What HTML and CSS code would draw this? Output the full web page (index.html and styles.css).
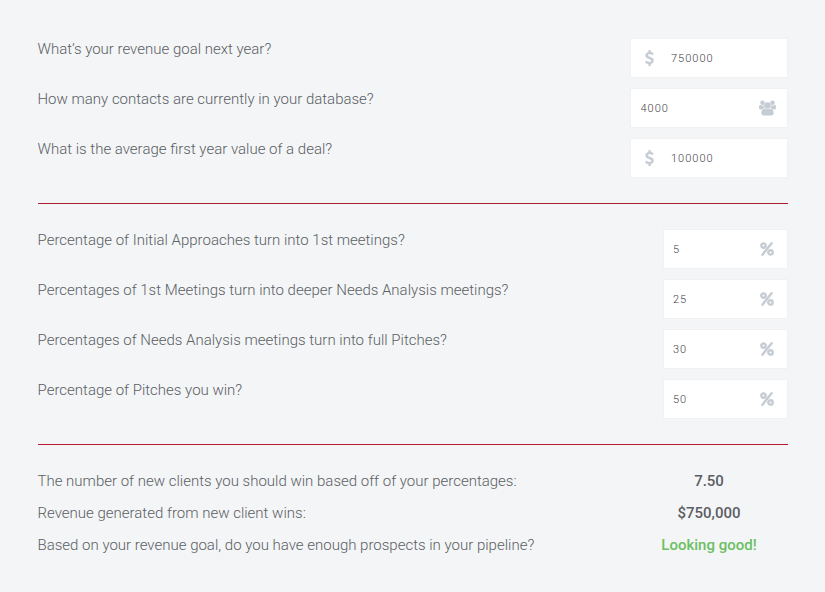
FILE: index.html
```html
<!DOCTYPE html>
<html lang="en">
<head>
<meta charset="UTF-8">
<meta name="viewport" content="width=device-width, initial-scale=1.0">
<title>Pipeline Calculator</title>
<link rel="stylesheet" href="styles.css">
</head>
<body>

<svg class="sprite" width="0" height="0">
    <symbol id="dollar" viewBox="0 0 1024 1792">
        <path stroke="currentColor" stroke-width="50" d="M978 1185q0 153-99.500 263.500t-258.500 136.500v175q0 14-9 23t-23 9h-135q-13 0-22.500-9.500t-9.500-22.500v-175q-66-9-127.500-31t-101.500-44.500-74-48-46.500-37.500-17.500-18q-17-21-2-41l103-135q7-10 23-12 15-2 24 9l2 2q113 99 243 125 37 8 74 8 81 0 142.500-43t61.500-122q0-28-15-53t-33.500-42-58.500-37.500-66-32-80-32.500q-39-16-61.500-25t-61.500-26.500-62.500-31-56.500-35.500-53.500-42.500-43.500-49-35.500-58-21-66.500-8.500-78q0-138 98-242t255-134v-180q0-13 9.500-22.500t22.500-9.500h135q14 0 23 9t9 23v176q57 6 110.500 23t87 33.500 63.500 37.500 39 29 15 14q17 18 5 38l-81 146q-8 15-23 16-14 3-27-7-3-3-14.500-12t-39-26.500-58.500-32-74.500-26-85.500-11.500q-95 0-155 43t-60 111q0 26 8.500 48t29.500 41.500 39.500 33 56 31 60.500 27 70 27.500q53 20 81 31.500t76 35 75.500 42.500 62 50 53 63.500 31.500 76.500 13 94z"/>
    </symbol>
    <symbol id="users" viewBox="0 0 18 16">
        <circle cx="3.700" cy="2.500" r="2.400"/>
        <circle cx="14.300" cy="2.500" r="2.400"/>
        <circle cx="9" cy="5.400" r="3.500"/>
        <path d="M1.300 4.500Q2.300 5.400 3.500 5.400Q4.200 5.400 4.900 5.100Q4.800 6.900 5.900 8.300Q4.300 8.400 3.300 9.500H1.600Q0 9.500 0 8.100Q0 4.500 1.300 4.500ZM16.700 4.500Q15.700 5.400 14.500 5.400Q13.800 5.400 13.100 5.100Q13.200 6.900 12.100 8.300Q13.700 8.400 14.700 9.500H16.400Q18 9.500 18 8.100Q18 4.500 16.700 4.500ZM5.900 8.900Q7.300 9.300 9 9.300T12.100 8.900Q15.500 9 15.500 13.500Q15.500 16 13 16H5Q2.500 16 2.500 13.500Q2.500 9 5.900 8.900Z"/>
    </symbol>
    <symbol id="percent" viewBox="0 0 14 14">
        <g fill="none" stroke="currentColor" stroke-width="2.400">
            <circle cx="3.500" cy="3.600" r="2.200"/>
            <circle cx="10.500" cy="10.400" r="2.200"/>
            <path d="M2.400 12.700L11.600 1.300" stroke-linecap="round" stroke-width="2.400"/>
        </g>
    </symbol>
</svg>

<div class="calculator">

<div class="section goals">
    <div class="row">
        <label for="revenueGoal">What’s your revenue goal next year?</label>
        <div class="field wide money"><svg class="icon dollar"><use href="#dollar"/></svg><input type="text" id="revenueGoal" value="750000"></div>
    </div>
    <div class="row">
        <label for="contacts">How many contacts are currently in your database?</label>
        <div class="field wide"><input type="text" id="contacts" value="4000"><svg class="icon users"><use href="#users"/></svg></div>
    </div>
    <div class="row">
        <label for="dealValue">What is the average first year value of a deal?</label>
        <div class="field wide money"><svg class="icon dollar"><use href="#dollar"/></svg><input type="text" id="dealValue" value="100000"></div>
    </div>
</div>

<div class="section rates">
    <div class="row">
        <label for="approaches">Percentage of Initial Approaches turn into 1st meetings?</label>
        <div class="field"><input type="text" id="approaches" value="5"><svg class="icon percent"><use href="#percent"/></svg></div>
    </div>
    <div class="row">
        <label for="meetings">Percentages of 1st Meetings turn into deeper Needs Analysis meetings?</label>
        <div class="field"><input type="text" id="meetings" value="25"><svg class="icon percent"><use href="#percent"/></svg></div>
    </div>
    <div class="row">
        <label for="pitches">Percentages of Needs Analysis meetings turn into full Pitches?</label>
        <div class="field"><input type="text" id="pitches" value="30"><svg class="icon percent"><use href="#percent"/></svg></div>
    </div>
    <div class="row">
        <label for="wins">Percentage of Pitches you win?</label>
        <div class="field"><input type="text" id="wins" value="50"><svg class="icon percent"><use href="#percent"/></svg></div>
    </div>
</div>

<div class="results">
    <div class="result"><span>The number of new clients you should win based off of your percentages:</span><strong>7.50</strong></div>
    <div class="result"><span>Revenue generated from new client wins:</span><strong>$750,000</strong></div>
    <div class="result"><span>Based on your revenue goal, do you have enough prospects in your pipeline?</span><strong class="good">Looking good!</strong></div>
</div>

</div>

</body>
</html>
```

FILE: styles.css
```css
body {
    font-family: Roboto, sans-serif;
    font-size: 15px;
    font-weight: 300;
    line-height: 20px;
    color: #5b5e63;
    background-color: #f3f5f7;
    margin: 0;
}
.sprite {
    position: absolute;
}
.calculator {
    width: 750px;
    padding: 38px 0 0 37.5px;
}
.section {
    border-bottom: 1px solid #ab1c31;
    padding-bottom: 15px;
    margin-bottom: 25px;
}
.rates {
    border-color: #b5182f;
}
.row {
    display: flex;
    justify-content: space-between;
    height: 50px;
}
.row label {
    padding-top: 1px;
}
.field {
    display: flex;
    align-items: center;
    box-sizing: border-box;
    width: 125px;
    height: 40px;
    padding: 0 12.5px 0 9.5px;
    border: 1px solid #f0f1f3;
    background-color: #fff;
}
.wide {
    width: 158px;
    padding-left: 10px;
    padding-right: 11px;
}
.money {
    padding-left: 14.5px;
}
.field input {
    flex: 1;
    min-width: 0;
    padding: 0;
    border: none;
    outline: none;
    background: none;
    font: 300 11px Roboto, sans-serif;
    letter-spacing: 1px;
    color: #3f4348;
}
.icon {
    flex: none;
    fill: currentColor;
    color: #c5ccd3;
}
.dollar {
    width: 9px;
    height: 16px;
    margin-right: 17px;
}
.users {
    width: 17px;
    height: 16px;
}
.percent {
    width: 14px;
    height: 14px;
}
.result {
    display: flex;
    justify-content: space-between;
    height: 32px;
    padding-top: 1px;
    box-sizing: border-box;
}
.result strong {
    width: 157px;
    text-align: center;
    font-weight: 500;
}
.result .good {
    color: #6cbf62;
}
```
